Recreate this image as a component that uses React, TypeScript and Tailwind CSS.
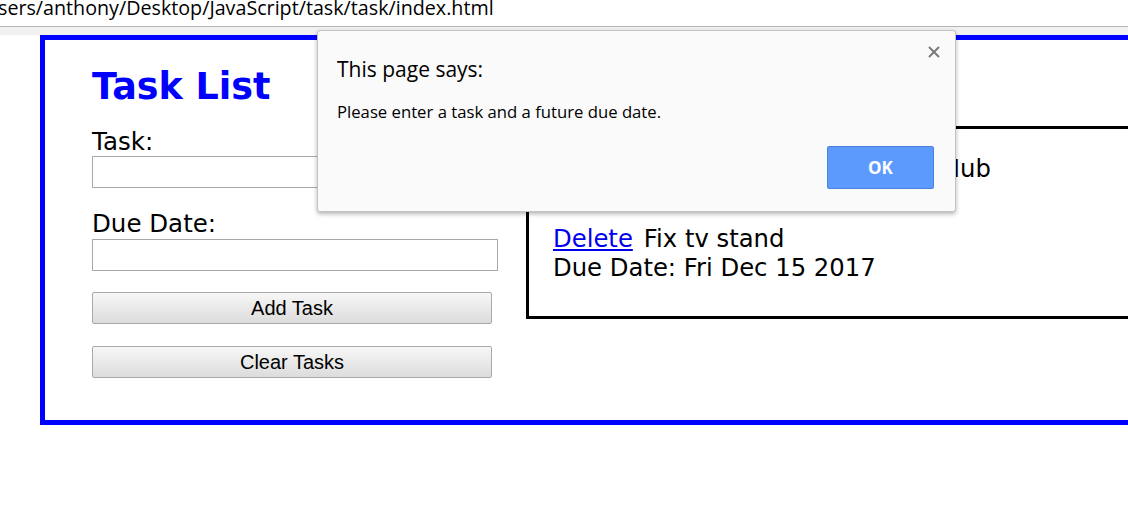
import { X } from 'lucide-react'

const tasks = [
  { id: 1, name: 'Upload my project to GitHub', due: 'Thu Dec 14 2017' },
  { id: 2, name: 'Fix tv stand', due: 'Fri Dec 15 2017' },
]

export default function App() {
  return (
    <div className="relative w-[1128px] h-[510px] overflow-hidden bg-white">
      {/* address strip */}
      <div className="h-[26px] -ml-[2px] -mt-[2px] text-[19.7px] leading-[20px] text-black font-['Open_Sans',sans-serif] whitespace-nowrap">
        sers/anthony/Desktop/JavaScript/task/task/index.html
      </div>
      <div className="h-[9px] mt-[2px] border-t border-[#b4b4b4] bg-[#f1f1f1]" />

      {/* page */}
      <div className="ml-[40px] w-[1150px] h-[390px] border-[5px] border-[#0000ff] flex font-['DejaVu_Sans',Verdana,sans-serif]">
        <div className="w-[481px] pl-[47px] pt-[26px]">
          <h1 className="text-[36.5px] leading-[42px] font-bold text-[#0000ff]">Task List</h1>

          <label className="block mt-[20px] text-[24.5px] leading-[27px] text-black">Task:</label>
          <input className="block mt-px w-[406px] h-[32px] border border-[#a9a9a9] bg-white" />

          <label className="block mt-[22px] text-[24.5px] leading-[27px] text-black">Due Date:</label>
          <input className="block mt-[2px] w-[406px] h-[32px] border border-[#a9a9a9] bg-white" />

          <button className="block mt-[21px] w-[400px] h-[32px] border border-[#a9a9a9] rounded-[2px] bg-gradient-to-b from-[#f7f7f7] to-[#dcdcdc] text-[20px] text-black font-['Liberation_Sans',Arial,sans-serif]">
            Add Task
          </button>
          <button className="block mt-[22px] w-[400px] h-[32px] border border-[#a9a9a9] rounded-[2px] bg-gradient-to-b from-[#f7f7f7] to-[#dcdcdc] text-[20px] text-black font-['Liberation_Sans',Arial,sans-serif]">
            Clear Tasks
          </button>
        </div>

        <div className="flex-1 mt-[86px] h-[193px] border-[3px] border-black pl-[24px] pt-[25px] flex flex-col gap-[12px]">
          {tasks.map((t) => (
            <div key={t.id} className="text-[24.3px] leading-[29px] text-black">
              <div>
                <a href="#" className="text-[#0000ee] underline mr-[11px]">Delete</a>
                {t.name}
              </div>
              <div>Due Date: {t.due}</div>
            </div>
          ))}
        </div>
      </div>

      {/* alert dialog */}
      <div className="absolute left-[317px] top-[30px] w-[639px] h-[182px] bg-[#fafafa] border border-[#c3c3c3] rounded-[3px] shadow-[0_2px_4px_rgba(0,0,0,0.3)] font-['Open_Sans','Noto_Sans',sans-serif] text-black">
        <X className="absolute right-[12px] top-[12px] w-[18px] h-[18px] text-[#7a7a7a]" strokeWidth={2.6} />
        <div className="pl-[19px] pt-[24px] text-[21px] leading-[28px]">This page says:</div>
        <div className="pl-[19px] pt-[18px] text-[16.7px] leading-[22px]">Please enter a task and a future due date.</div>
        <div className="flex justify-end pr-[21px] pt-[23px]">
          <button className="w-[107px] h-[43px] bg-[#5c9afd] border border-[#4a82e0] rounded-[2px] text-white font-bold text-[17px]">
            OK
          </button>
        </div>
      </div>
    </div>
  )
}
